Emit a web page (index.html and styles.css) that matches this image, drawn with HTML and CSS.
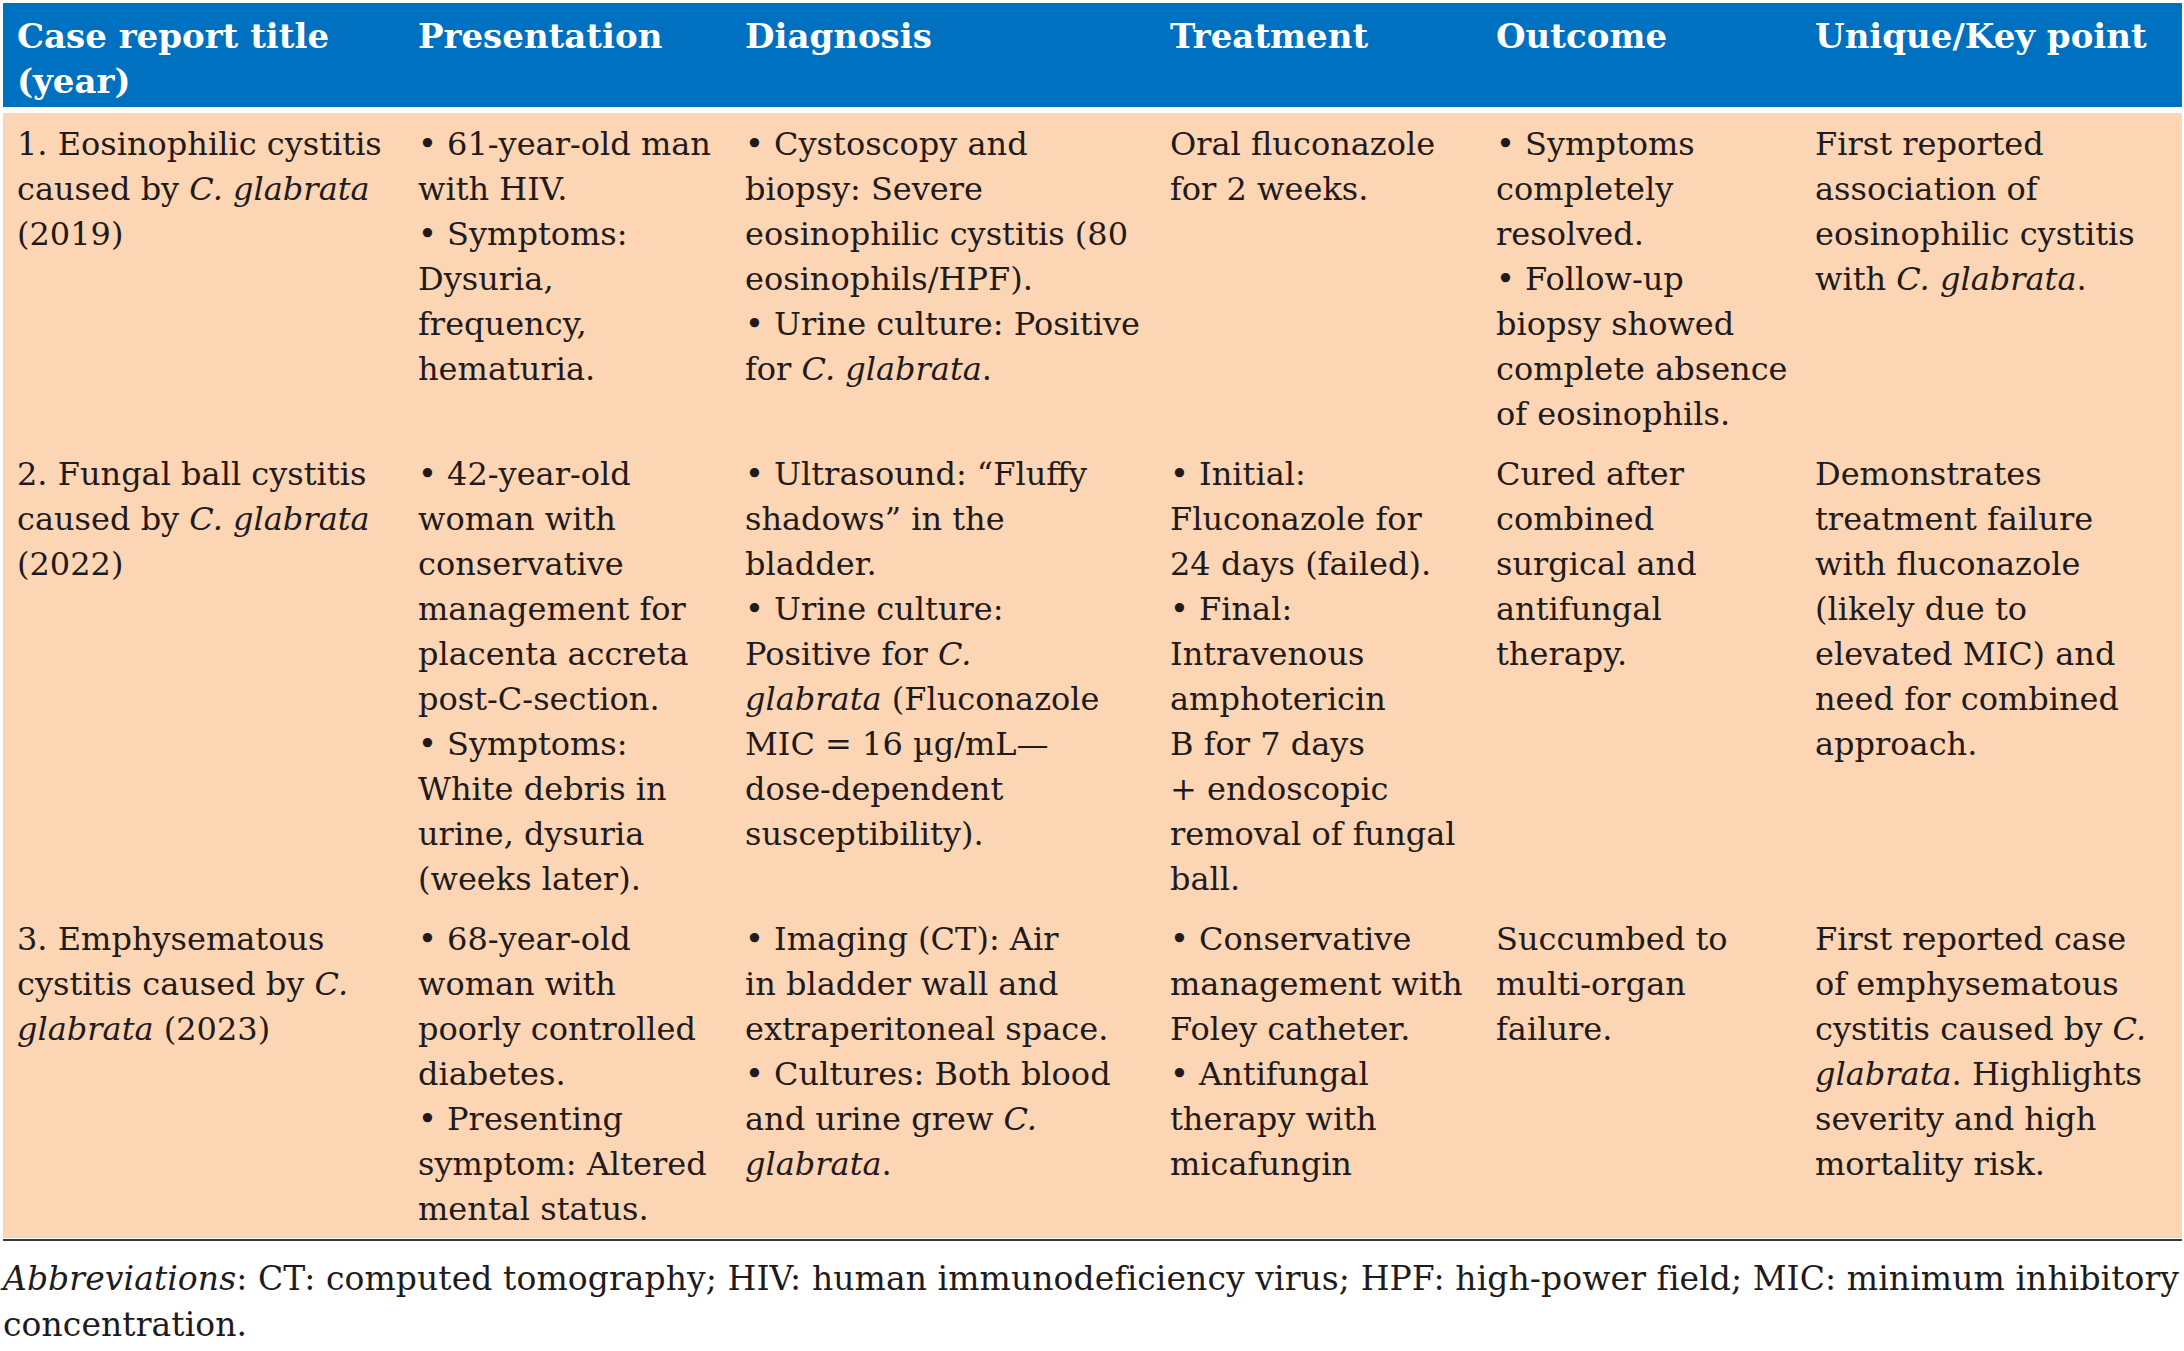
FILE: index.html
```html
<!DOCTYPE html>
<html lang="en">
<head>
<meta charset="utf-8">
<title>Case reports of C. glabrata cystitis</title>
<link rel="stylesheet" href="styles.css">
</head>
<body>
<div class="page">
  <div class="table">
    <div class="row head">
      <div class="cell">Case report title<br>(year)</div>
      <div class="cell">Presentation</div>
      <div class="cell">Diagnosis</div>
      <div class="cell">Treatment</div>
      <div class="cell">Outcome</div>
      <div class="cell">Unique/Key point</div>
    </div>
    <div class="body">
      <div class="row">
        <div class="cell">1. Eosinophilic cystitis<br>caused by <i>C. glabrata</i><br>(2019)</div>
        <div class="cell">• 61-year-old man<br>with HIV.<br>• Symptoms:<br>Dysuria,<br>frequency,<br>hematuria.</div>
        <div class="cell">• Cystoscopy and<br>biopsy: Severe<br>eosinophilic cystitis (80<br>eosinophils/HPF).<br>• Urine culture: Positive<br>for <i>C. glabrata</i>.</div>
        <div class="cell">Oral fluconazole<br>for 2 weeks.</div>
        <div class="cell">• Symptoms<br>completely<br>resolved.<br>• Follow-up<br>biopsy showed<br>complete absence<br>of eosinophils.</div>
        <div class="cell">First reported<br>association of<br>eosinophilic cystitis<br>with <i>C. glabrata</i>.</div>
      </div>
      <div class="row">
        <div class="cell">2. Fungal ball cystitis<br>caused by <i>C. glabrata</i><br>(2022)</div>
        <div class="cell">• 42-year-old<br>woman with<br>conservative<br>management for<br>placenta accreta<br>post-C-section.<br>• Symptoms:<br>White debris in<br>urine, dysuria<br>(weeks later).</div>
        <div class="cell">• Ultrasound: “Fluffy<br>shadows” in the<br>bladder.<br>• Urine culture:<br>Positive for <i>C.</i><br><i>glabrata</i> (Fluconazole<br>MIC = 16 µg/mL—<br>dose-dependent<br>susceptibility).</div>
        <div class="cell">• Initial:<br>Fluconazole for<br>24 days (failed).<br>• Final:<br>Intravenous<br>amphotericin<br>B for 7 days<br>+ endoscopic<br>removal of fungal<br>ball.</div>
        <div class="cell">Cured after<br>combined<br>surgical and<br>antifungal<br>therapy.</div>
        <div class="cell">Demonstrates<br>treatment failure<br>with fluconazole<br>(likely due to<br>elevated MIC) and<br>need for combined<br>approach.</div>
      </div>
      <div class="row">
        <div class="cell">3. Emphysematous<br>cystitis caused by <i>C.</i><br><i>glabrata</i> (2023)</div>
        <div class="cell">• 68-year-old<br>woman with<br>poorly controlled<br>diabetes.<br>• Presenting<br>symptom: Altered<br>mental status.</div>
        <div class="cell">• Imaging (CT): Air<br>in bladder wall and<br>extraperitoneal space.<br>• Cultures: Both blood<br>and urine grew <i>C.</i><br><i>glabrata</i>.</div>
        <div class="cell">• Conservative<br>management with<br>Foley catheter.<br>• Antifungal<br>therapy with<br>micafungin</div>
        <div class="cell">Succumbed to<br>multi-organ<br>failure.</div>
        <div class="cell">First reported case<br>of emphysematous<br>cystitis caused by <i>C.</i><br><i>glabrata</i>. Highlights<br>severity and high<br>mortality risk.</div>
      </div>
    </div>
  </div>
  <p class="note"><i>Abbreviations</i>: CT: computed tomography; HIV: human immunodeficiency virus; HPF: high-power field; MIC: minimum inhibitory<br>concentration.</p>
</div>
</body>
</html>
```
FILE: styles.css
```css
html, body {
  margin: 0;
  padding: 0;
  background: #ffffff;
}

body {
  font-family: "DejaVu Serif", "Liberation Serif", serif;
  font-size: 32px;
  line-height: 45px;
  color: #1f1b1c;
}

.page {
  padding: 3px 2px 0 3px;
  width: 2179px;
}

.table {
  padding-bottom: 1px;
  border-bottom: 2px solid #3a3a3a;
}

.row {
  display: grid;
  grid-template-columns: 401px 327px 425px 326px 319px 381px;
}

.head {
  background: #0070c0;
  color: #ffffff;
  font-weight: bold;
  font-size: 34px;
  padding: 11px 0 3px;
  margin-bottom: 6px;
}

.body {
  background: #fcd5b4;
}

.body .row {
  padding: 9px 0 6px;
}

.cell {
  padding: 0 4px 0 14px;
  white-space: nowrap;
}

.note {
  margin: 15px 0 0;
  padding: 0;
  font-size: 33px;
  letter-spacing: 0.08px;
  line-height: 46px;
  white-space: nowrap;
}
```
